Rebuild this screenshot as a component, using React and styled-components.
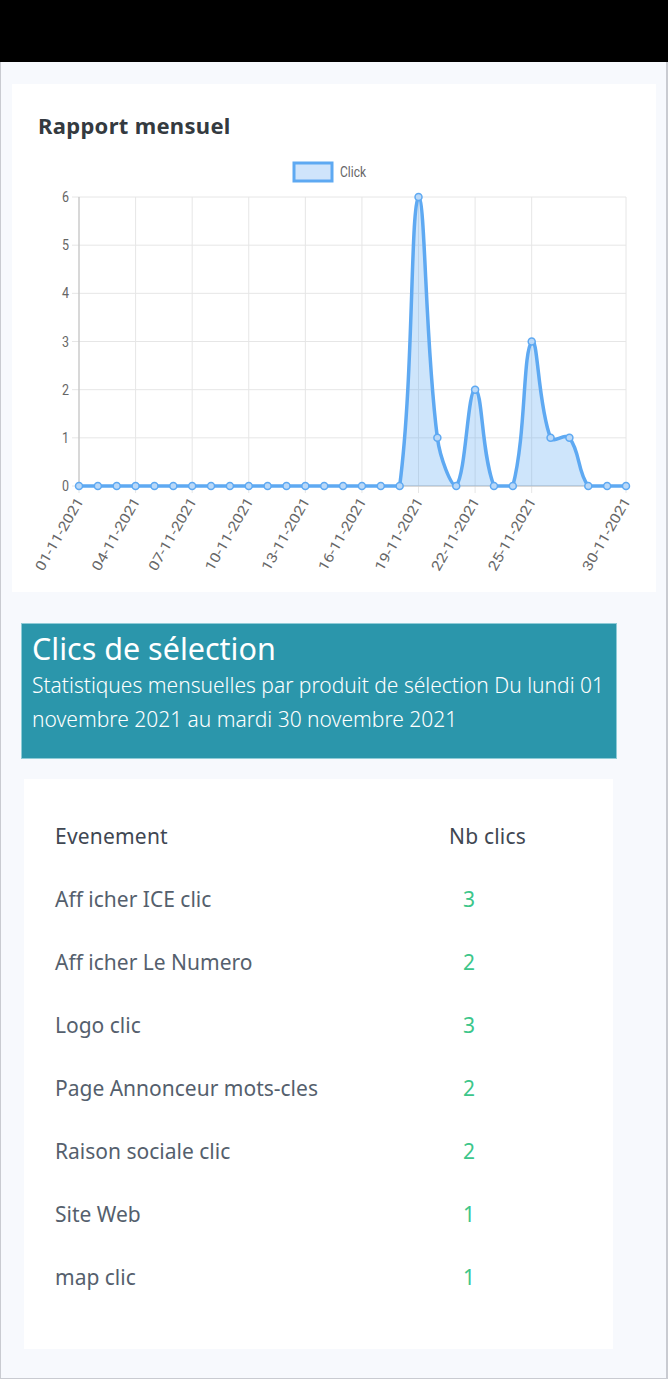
import styled, { createGlobalStyle } from "styled-components";

const GlobalStyle = createGlobalStyle`
  html, body {
    margin: 0;
    padding: 0;
    background: #000;
  }
  body {
    font-family: "Noto Sans", "Open Sans", sans-serif;
  }
`;

const clicks = [
  0, 0, 0, 0, 0, 0, 0, 0, 0, 0, 0, 0, 0, 0, 0, 0, 0, 0,
  6, 1, 0, 2, 0, 0, 3, 1, 1, 0, 0, 0,
];

const rows = [
  { label: "Aff icher ICE clic", count: 3 },
  { label: "Aff icher Le Numero", count: 2 },
  { label: "Logo clic", count: 3 },
  { label: "Page Annonceur mots-cles", count: 2 },
  { label: "Raison sociale clic", count: 2 },
  { label: "Site Web", count: 1 },
  { label: "map clic", count: 1 },
];

const AREA = { left: 67, right: 614, top: 45, bottom: 334 };
const STEP = (AREA.right - AREA.left) / 29;
const UNIT = (AREA.bottom - AREA.top) / 6;
const px = (i) => AREA.left + i * STEP;
const py = (v) => AREA.bottom - v * UNIT;

const cap = (p) => ({
  x: Math.min(Math.max(p.x, AREA.left), AREA.right),
  y: Math.min(Math.max(p.y, AREA.top), AREA.bottom),
});

// same curve chart.js draws with tension 0.4
const buildPath = (values) => {
  const pts = values.map((v, i) => ({ x: px(i), y: py(v) }));
  const ctrl = pts.map((cur, i) => {
    const prev = pts[i - 1] || cur;
    const next = pts[i + 1] || cur;
    const d01 = Math.hypot(cur.x - prev.x, cur.y - prev.y);
    const d12 = Math.hypot(next.x - cur.x, next.y - cur.y);
    const s01 = d01 / (d01 + d12) || 0;
    const s12 = d12 / (d01 + d12) || 0;
    const fa = 0.4 * s01;
    const fb = 0.4 * s12;
    return {
      prev: cap({ x: cur.x - fa * (next.x - prev.x), y: cur.y - fa * (next.y - prev.y) }),
      next: cap({ x: cur.x + fb * (next.x - prev.x), y: cur.y + fb * (next.y - prev.y) }),
    };
  });
  let d = `M${pts[0].x},${pts[0].y}`;
  for (let i = 1; i < pts.length; i++) {
    const a = ctrl[i - 1].next;
    const b = ctrl[i].prev;
    d += ` C${a.x},${a.y} ${b.x},${b.y} ${pts[i].x},${pts[i].y}`;
  }
  return { d, pts };
};

const xTicks = [0, 3, 6, 9, 12, 15, 18, 21, 24, 29];
const dayLabel = (i) => `${String(i + 1).padStart(2, "0")}-11-2021`;

const MonthlyChart = () => {
  const { d, pts } = buildPath(clicks);
  const area = `${d} L${AREA.right},${AREA.bottom} L${AREA.left},${AREA.bottom} Z`;
  return (
    <ChartSvg viewBox="0 0 644 440" width="644" height="440">
      <rect x="282" y="11" width="38" height="18" fill="#cfe4fb" stroke="#5ea9f2" strokeWidth="3" />
      <text x="328" y="25" fontSize="15" fill="#666" fontFamily="Roboto, sans-serif" textLength="26" lengthAdjust="spacingAndGlyphs">
        Click
      </text>

      {[0, 1, 2, 3, 4, 5, 6].map((v) => (
        <g key={v}>
          <line x1={AREA.left - 7} x2={AREA.right} y1={py(v)} y2={py(v)} stroke="#e6e6e6" strokeWidth="1" />
          <text x="57" y={py(v) + 5} fontSize="15" fill="#666" textAnchor="end" fontFamily="Roboto, sans-serif" textLength="7" lengthAdjust="spacingAndGlyphs">
            {v}
          </text>
        </g>
      ))}

      {xTicks.map((i) => (
        <g key={i}>
          <line x1={px(i)} x2={px(i)} y1={AREA.top} y2={AREA.bottom + 7} stroke="#e6e6e6" strokeWidth="1" />
          <text
            transform={`translate(${px(i) + 5},${AREA.bottom + 15}) rotate(-60)`}
            fontSize="14"
            fill="#666"
            textAnchor="end"
            fontFamily="Roboto, sans-serif"
            textLength="82"
            lengthAdjust="spacingAndGlyphs"
          >
            {dayLabel(i)}
          </text>
        </g>
      ))}

      <line x1={AREA.left} x2={AREA.left} y1={AREA.top} y2={AREA.bottom} stroke="#bdbdbd" strokeWidth="1" />
      <line x1={AREA.left} x2={AREA.right} y1={AREA.bottom} y2={AREA.bottom} stroke="#bdbdbd" strokeWidth="1" />

      <path d={area} fill="rgba(94, 169, 242, 0.3)" />
      <path d={d} fill="none" stroke="#5ea9f2" strokeWidth="3.5" />
      {pts.map((p, i) => (
        <circle key={i} cx={p.x} cy={p.y} r="3.5" fill="#b9d8f8" stroke="#5ea9f2" strokeWidth="1.5" />
      ))}
    </ChartSvg>
  );
};

export default function App() {
  return (
    <>
      <GlobalStyle />
      <TopBar />
      <Page>
        <ChartCard>
          <CardTitle>Rapport mensuel</CardTitle>
          <MonthlyChart />
        </ChartCard>

        <Banner>
          <BannerTitle>Clics de sélection</BannerTitle>
          <BannerText>
            Statistiques mensuelles par produit de sélection Du lundi 01 novembre 2021 au mardi 30 novembre 2021
          </BannerText>
        </Banner>

        <TableCard>
          <Row>
            <HeadCell>Evenement</HeadCell>
            <HeadCell>Nb clics</HeadCell>
          </Row>
          {rows.map((r) => (
            <Row key={r.label}>
              <Cell>{r.label}</Cell>
              <Count>{r.count}</Count>
            </Row>
          ))}
        </TableCard>
      </Page>
    </>
  );
}

const TopBar = styled.div`
  height: 62px;
  background: #000;
`;

const Page = styled.div`
  box-sizing: border-box;
  width: 668px;
  height: 1317px;
  background: #f7f9fd;
  border: 1px solid #c9cbd1;
  border-top: none;
  border-right-width: 2px;
  padding: 22px 0 0;
  display: flex;
  flex-direction: column;
`;

const ChartCard = styled.div`
  background: #fff;
  margin: 0 10px 0 11px;
  height: 508px;
  display: flex;
  flex-direction: column;
`;

const CardTitle = styled.h3`
  margin: 27px 0 13px 26px;
  font-size: 22px;
  line-height: 28px;
  font-weight: 700;
  letter-spacing: 0.3px;
  color: #343a40;
`;

const ChartSvg = styled.svg`
  display: block;
`;

const Banner = styled.div`
  box-sizing: border-box;
  margin: 31px 0 0 20px;
  width: 596px;
  height: 136px;
  background: #2b96ab;
  border: 1px solid #8fcbd7;
  padding: 4px 10px 0 10px;
  color: #fff;
`;

const BannerTitle = styled.div`
  font-size: 30.5px;
  line-height: 40px;
  font-weight: 400;
`;

const BannerText = styled.div`
  font-size: 21px;
  line-height: 34px;
  font-weight: 300;
`;

const TableCard = styled.div`
  box-sizing: border-box;
  margin: 20px 0 0 23px;
  width: 589px;
  height: 570px;
  background: #fff;
  padding: 25px 0 0 31px;
`;

const Row = styled.div`
  display: grid;
  grid-template-columns: 394px 1fr;
  height: 63px;
  align-items: center;
`;

const HeadCell = styled.div`
  font-size: 21px;
  letter-spacing: 0.2px;
  color: #3f4752;
`;

const Cell = styled.div`
  font-size: 21px;
  color: #555f6d;
`;

const Count = styled.div`
  font-size: 21px;
  color: #3cc68a;
  padding-left: 14px;
`;
